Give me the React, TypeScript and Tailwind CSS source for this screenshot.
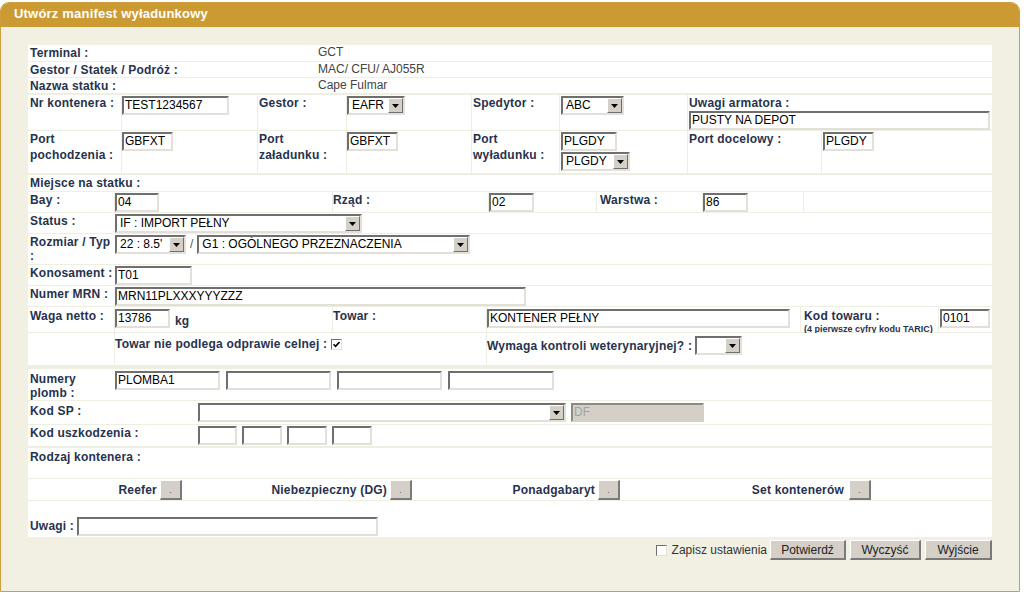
import type { ReactNode } from 'react';

const SEP = 'border-l border-[#efeee3]';

function Label({ children, className = '' }: { children: ReactNode; className?: string }) {
  return (
    <div className={`text-[12px] font-bold leading-4 tracking-[0.2px] text-[#27324d] ${className}`}>{children}</div>
  );
}

function Field({ value = '', w, className = '' }: { value?: string; w: string; className?: string }) {
  return (
    <div
      className={`h-[19px] ${w} overflow-hidden whitespace-nowrap border-2 border-t-[#6f6f6f] border-l-[#6f6f6f] border-b-[#e2e0d8] border-r-[#e2e0d8] bg-white pl-[1px] text-[12px] leading-[15px] text-black ${className}`}
    >
      {value}
    </div>
  );
}

function Arrow() {
  return (
    <div className="flex h-[15px] w-[15px] shrink-0 items-center justify-center border border-t-white border-l-white border-b-[#6f6f6f] border-r-[#6f6f6f] bg-[#d4d0c8]">
      <svg width="7" height="4" viewBox="0 0 7 4">
        <polygon points="0,0 7,0 3.5,4" fill="#000" />
      </svg>
    </div>
  );
}

function Select({ value = '', w, className = '' }: { value?: string; w: string; className?: string }) {
  return (
    <div
      className={`flex h-[19px] ${w} items-center border-2 border-t-[#6f6f6f] border-l-[#6f6f6f] border-b-[#e2e0d8] border-r-[#e2e0d8] bg-white text-[12px] text-black ${className}`}
    >
      <span className="flex-1 overflow-hidden whitespace-nowrap pl-[3px] leading-[15px]">{value}</span>
      <Arrow />
    </div>
  );
}

function DotButton() {
  return (
    <div className="flex h-[20px] w-[22px] items-end justify-center border border-t-white border-l-white border-r-2 border-b-2 border-r-[#7a7a7a] border-b-[#7a7a7a] bg-[#d4d0c8] pb-[3px] text-[9px] leading-none text-[#555]">
      .
    </div>
  );
}

function Button({ children, w }: { children: ReactNode; w: string }) {
  return (
    <div
      className={`flex h-[20px] ${w} items-center justify-center border border-t-white border-l-white border-r-2 border-b-2 border-r-[#7a7a7a] border-b-[#7a7a7a] bg-[#d4d0c8] text-[12px] text-[#222]`}
    >
      {children}
    </div>
  );
}

function Checkbox({ checked = false }: { checked?: boolean }) {
  return (
    <div className="flex h-[11px] w-[11px] items-center justify-center border border-t-[#6f6f6f] border-l-[#6f6f6f] border-b-[#e2e0d8] border-r-[#e2e0d8] bg-white">
      {checked && (
        <svg width="7" height="7" viewBox="0 0 7 7">
          <path d="M0.5 3.2 L2.6 5.4 L6.5 1" stroke="#000" strokeWidth="1.6" fill="none" />
        </svg>
      )}
    </div>
  );
}

export default function App() {
  return (
    <div className="h-[595px] w-[1024px] bg-white pt-[2px] font-['Liberation_Sans',Arial,sans-serif]">
      <div className="flex h-[590px] w-[1020px] flex-col overflow-hidden rounded-t-[9px] border border-[#cf9f3d] bg-[#f1f0e2]">
        {/* Header */}
        <div className="h-[24px] shrink-0 bg-[#cc9a33] pl-[13px] text-[13px] font-bold leading-[22px] tracking-[0.2px] text-white">
          Utwórz manifest wyładunkowy
        </div>

        <div className="pl-[27px] pt-[18px]">
          {/* Form area */}
          <div className="flex w-[964px] flex-col bg-[#efeee3]">
            {/* Voyage info */}
            {[
              ['Terminal :', 'GCT', 'h-[16px]'],
              ['Gestor / Statek / Podróż :', 'MAC/ CFU/ AJ055R', 'mt-px h-[15px]'],
              ['Nazwa statku :', 'Cape Fulmar', 'mt-px h-[15px]'],
            ].map(([l, v, h]) => (
              <div key={l} className={`flex bg-white ${h}`}>
                <Label className="w-[288px] pl-[2px]">{l}</Label>
                <div className="pl-[2px] text-[12px] leading-[15px] text-[#444]">{v}</div>
              </div>
            ))}

            {/* Container */}
            <div className="mt-[2px] flex h-[35px] bg-white">
              <Label className="w-[93px] pl-[2px]">Nr kontenera :</Label>
              <div className={`w-[136px] pt-px ${SEP}`}>
                <Field value="TEST1234567" w="w-[107px]" />
              </div>
              <Label className={`w-[89px] pl-[1px] ${SEP}`}>Gestor :</Label>
              <div className={`w-[125px] pt-px ${SEP}`}>
                <Select value="EAFR" w="w-[58px]" />
              </div>
              <Label className={`w-[88px] pl-[1px] ${SEP}`}>Spedytor :</Label>
              <div className={`w-[128px] pl-px pt-px ${SEP}`}>
                <Select value="ABC" w="w-[63px]" />
              </div>
              <div className={`flex-1 pl-px ${SEP}`}>
                <Label>Uwagi armatora :</Label>
                <Field value="PUSTY NA DEPOT" w="w-[301px]" />
              </div>
            </div>

            <div className="mt-px flex h-[42px] bg-white">
              <Label className="w-[93px] pl-[2px]">
                Port
                <br />
                pochodzenia :
              </Label>
              <div className={`w-[136px] pt-px ${SEP}`}>
                <Field value="GBFXT" w="w-[51px]" />
              </div>
              <Label className={`w-[89px] pl-[1px] ${SEP}`}>
                Port
                <br />
                załadunku :
              </Label>
              <div className={`w-[125px] pt-px ${SEP}`}>
                <Field value="GBFXT" w="w-[51px]" />
              </div>
              <Label className={`w-[88px] pl-[1px] ${SEP}`}>
                Port
                <br />
                wyładunku :
              </Label>
              <div className={`flex w-[128px] flex-col gap-px pl-px pt-px ${SEP}`}>
                <Field value="PLGDY" w="w-[56px]" />
                <Select value="PLGDY" w="w-[69px]" />
              </div>
              <Label className={`w-[134px] pl-px ${SEP}`}>Port docelowy :</Label>
              <div className={`flex-1 pl-px pt-px ${SEP}`}>
                <Field value="PLGDY" w="w-[51px]" />
              </div>
            </div>

            {/* Position on vessel */}
            <div className="mt-[2px] h-[16px] bg-white">
              <Label className="pl-[2px]">Miejsce na statku :</Label>
            </div>

            <div className="mt-px flex h-[20px] bg-white">
              <Label className="w-[86px] pl-[2px]">Bay :</Label>
              <div className={`w-[218px] pt-px ${SEP}`}>
                <Field value="04" w="w-[44px]" />
              </div>
              <Label className={`w-[156px] ${SEP}`}>Rząd :</Label>
              <div className={`w-[108px] pt-px ${SEP}`}>
                <Field value="02" w="w-[45px]" />
              </div>
              <Label className={`w-[106px] pl-[3px] ${SEP}`}>Warstwa :</Label>
              <div className={`w-[101px] pt-px ${SEP}`}>
                <Field value="86" w="w-[45px]" />
              </div>
              <div className={`flex-1 ${SEP}`} />
            </div>

            <div className="mt-px flex h-[20px] bg-white">
              <Label className="w-[86px] pl-[2px]">Status :</Label>
              <div className="pl-px pt-px">
                <Select value="IF : IMPORT PEŁNY" w="w-[247px]" />
              </div>
            </div>

            <div className="mt-px flex h-[30px] bg-white">
              <Label className="w-[86px] pl-[2px] leading-[14px] pt-px">
                Rozmiar / Typ
                <br />:
              </Label>
              <div className="flex items-start pl-px pt-px">
                <Select value="22 : 8.5'" w="w-[71px]" />
                <span className="px-[4px] text-[12px] leading-[19px] text-[#555]">/</span>
                <Select value="G1 : OGÓLNEGO PRZEZNACZENIA" w="w-[273px]" />
              </div>
            </div>

            <div className="mt-px flex h-[20px] bg-white">
              <Label className="w-[86px] pl-[2px]">Konosament :</Label>
              <div className="pl-px pt-px">
                <Field value="T01" w="w-[77px]" />
              </div>
            </div>

            <div className="mt-px flex h-[20px] bg-white">
              <Label className="w-[86px] pl-[2px]">Numer MRN :</Label>
              <div className="pl-px pt-px">
                <Field value="MRN11PLXXXYYYZZZ" w="w-[411px]" />
              </div>
            </div>

            <div className="mt-px flex h-[25px] bg-white">
              <Label className="w-[86px] pl-[2px] pt-px">Waga netto :</Label>
              <div className={`flex w-[218px] items-start pt-[2px] ${SEP}`}>
                <Field value="13786" w="w-[55px]" />
                <Label className="pl-[5px] pt-[4px]">kg</Label>
              </div>
              <Label className={`w-[154px] pt-px ${SEP}`}>Towar :</Label>
              <div className={`w-[314px] pt-[2px] ${SEP}`}>
                <Field value="KONTENER PEŁNY" w="w-[303px]" />
              </div>
              <div className={`w-[138px] pl-[3px] pt-px ${SEP}`}>
                <Label>Kod towaru :</Label>
                <div className="whitespace-nowrap text-[9px] font-bold leading-[10px] text-[#27324d]">
                  (4 pierwsze cyfry kodu TARIC)
                </div>
              </div>
              <div className={`flex-1 pl-px pt-[2px] ${SEP}`}>
                <Field value="0101" w="w-[50px]" />
              </div>
            </div>

            <div className="mt-px flex h-[32px] bg-white">
              <div className="w-[86px]" />
              <div className={`flex w-[372px] items-start gap-[4px] pt-[3px] ${SEP}`}>
                <Label>Towar nie podlega odprawie celnej :</Label>
                <div className="pt-[3px]">
                  <Checkbox checked />
                </div>
              </div>
              <div className={`flex flex-1 items-start gap-[3px] pt-[3px] ${SEP}`}>
                <Label className="pt-[2px]">Wymaga kontroli weterynaryjnej? :</Label>
                <Select w="w-[47px]" />
              </div>
            </div>

            {/* Seals */}
            <div className="mt-[4px] flex h-[31px] bg-white">
              <Label className="w-[86px] pl-[2px] pt-[3px] leading-[14px]">
                Numery
                <br />
                plomb :
              </Label>
              <div className="flex gap-[6px] pl-px pt-[2px]">
                <Field value="PLOMBA1" w="w-[105px]" />
                <Field w="w-[105px]" />
                <Field w="w-[105px]" />
                <Field w="w-[106px]" />
              </div>
            </div>

            <div className="mt-px flex h-[23px] bg-white">
              <Label className="w-[170px] pl-[2px] pt-[2px]">Kod SP :</Label>
              <div className="flex gap-[5px] pt-[2px]">
                <Select w="w-[368px]" />
                <div className="h-[19px] w-[133px] border-2 border-t-[#8a8a8a] border-l-[#8a8a8a] border-b-[#d4d0c8] border-r-[#d4d0c8] bg-[#d4d0c8] pl-[1px] text-[12px] leading-[15px] text-[#a3a3a3]">
                  DF
                </div>
              </div>
            </div>

            <div className="mt-px flex h-[21px] bg-white">
              <Label className="w-[170px] pl-[2px]">Kod uszkodzenia :</Label>
              <div className="flex gap-[5px] pt-px">
                <Field w="w-[39px]" />
                <Field w="w-[40px]" />
                <Field w="w-[40px]" />
                <Field w="w-[40px]" />
              </div>
            </div>

            {/* Container kind */}
            <div className="mt-[2px] h-[30px] bg-white">
              <Label className="pl-[2px] pt-px">Rodzaj kontenera :</Label>
            </div>

            <div className="mt-px flex h-[21px] items-center bg-white">
              <div className="flex w-[154px] items-center justify-end gap-[3px]">
                <Label>Reefer</Label>
                <DotButton />
              </div>
              <div className="flex w-[230px] items-center justify-end gap-[3px]">
                <Label>Niebezpieczny (DG)</Label>
                <DotButton />
              </div>
              <div className="flex w-[208px] items-center justify-end gap-[3px]">
                <Label>Ponadgabaryt</Label>
                <DotButton />
              </div>
              <div className="flex w-[251px] items-center justify-end gap-[5px]">
                <Label>Set kontenerów</Label>
                <DotButton />
              </div>
            </div>

            <div className="mt-px h-[14px] bg-white" />

            <div className="flex h-[22px] items-start bg-white">
              <Label className="w-[49px] pl-[2px] pt-[3px]">Uwagi :</Label>
              <div className="pt-[2px]">
                <Field w="w-[301px]" />
              </div>
            </div>
          </div>

          {/* Actions */}
          <div className="flex w-[964px] items-center justify-end pt-[3px]">
            <Checkbox />
            <span className="pl-[5px] pr-[3px] text-[12px] text-[#333]">Zapisz ustawienia</span>
            <div className="flex gap-[4px]">
              <Button w="w-[76px]">Potwierdź</Button>
              <Button w="w-[71px]">Wyczyść</Button>
              <Button w="w-[67px]">Wyjście</Button>
            </div>
          </div>
        </div>
      </div>
    </div>
  );
}
